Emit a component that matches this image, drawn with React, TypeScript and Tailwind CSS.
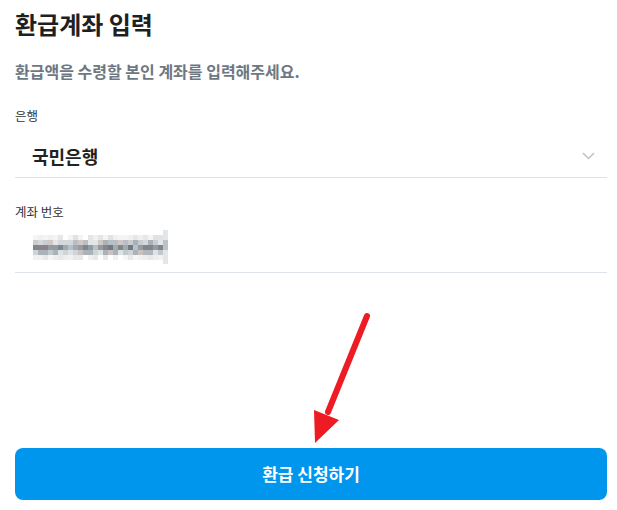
import React from "react";

const FONT = '"Noto Sans CJK KR", "Noto Sans", sans-serif';

function Mosaic() {
  const cols = 26;
  const rows = 5;
  const rects: React.ReactElement[] = [];
  let seed = 7;
  const rnd = () => {
    seed = (seed * 9301 + 49297) % 233280;
    return seed / 233280;
  };
  const palettes = [
    ["#eef0f2", "#e4e8ea", "#f4f4f4", "#dfe3e6", "#e9e4e2"],
    ["#c9cdd0", "#b8bfc4", "#d5d8da", "#a9b2b8", "#cfc8c4", "#e2e6e8"],
    ["#7f878d", "#949ca1", "#6f7a82", "#a3a9ad", "#8d8287", "#b5c2c8", "#9aa3a8"],
    ["#c3c8cc", "#b0b8be", "#d0d4d7", "#aab3b9", "#c9c2c0", "#dde2e5"],
    ["#f0f1f2", "#e6e9eb", "#f6f6f6", "#eceef0"],
  ];
  for (let r = 0; r < rows; r++) {
    for (let c = 0; c < cols; c++) {
      const p = palettes[r];
      const col = p[Math.floor(rnd() * p.length)];
      const skip = rnd() < 0.12 && (r === 0 || r === 4);
      if (skip) continue;
      rects.push(<rect key={`${r}-${c}`} x={c * 5} y={r * 5} width={5} height={5} fill={col} />);
    }
  }
  return (
    <svg width="136" height="34" viewBox="0 -5 136 34">
      {rects}
      <rect x={130} y={-5} width={5} height={34} fill="#e3e6e8" />
      <rect x={130} y={5} width={5} height={10} fill="#b9c3c9" />
    </svg>
  );
}

export default function App() {
  return (
    <div
      className="relative flex h-[510px] w-[617px] flex-col bg-white pl-[15px] pr-[10px] pb-[10px]"
      style={{ fontFamily: FONT }}
    >
      <h1 className="mt-[8px] text-[24px] leading-[32px] font-bold text-[#1f1f1f]">환급계좌 입력</h1>
      <p className="mt-[21px] text-[16px] leading-[20px] font-bold text-[#6e7882]">
        환급액을 수령할 본인 계좌를 입력해주세요.
      </p>

      <div className="mt-[26px] text-[12.5px] leading-[18px] text-[#333]">은행</div>
      <div className="flex h-[53px] items-center justify-between border-b border-[#e2e2e2] pt-[9px] pl-[17px] pr-[12px]">
        <span className="text-[18px] leading-[24px] font-bold text-[#222]">국민은행</span>
        <svg width="13" height="8" viewBox="0 0 13 8" fill="none">
          <path d="M1 1.2 L6.5 6.5 L12 1.2" stroke="#c4c4c4" strokeWidth="1.6" />
        </svg>
      </div>

      <div className="mt-[25px] text-[12.5px] leading-[18px] text-[#333]">계좌 번호</div>
      <div className="flex h-[52px] items-center border-b border-[#dde3e8] pl-[18px]">
        <Mosaic />
      </div>

      <div className="flex-1" />

      <button className="flex h-[52px] w-full items-center justify-center rounded-[8px] bg-[#0096ee] text-[17px] font-bold text-white">
        환급 신청하기
      </button>

      <svg
        className="pointer-events-none absolute left-0 top-0"
        width="617"
        height="510"
        viewBox="0 0 617 510"
      >
        <line x1="367" y1="316" x2="328" y2="412" stroke="#ed1c24" strokeWidth="6" strokeLinecap="round" />
        <polygon points="315,443 314,410 339,420" fill="#ed1c24" />
      </svg>
    </div>
  );
}
